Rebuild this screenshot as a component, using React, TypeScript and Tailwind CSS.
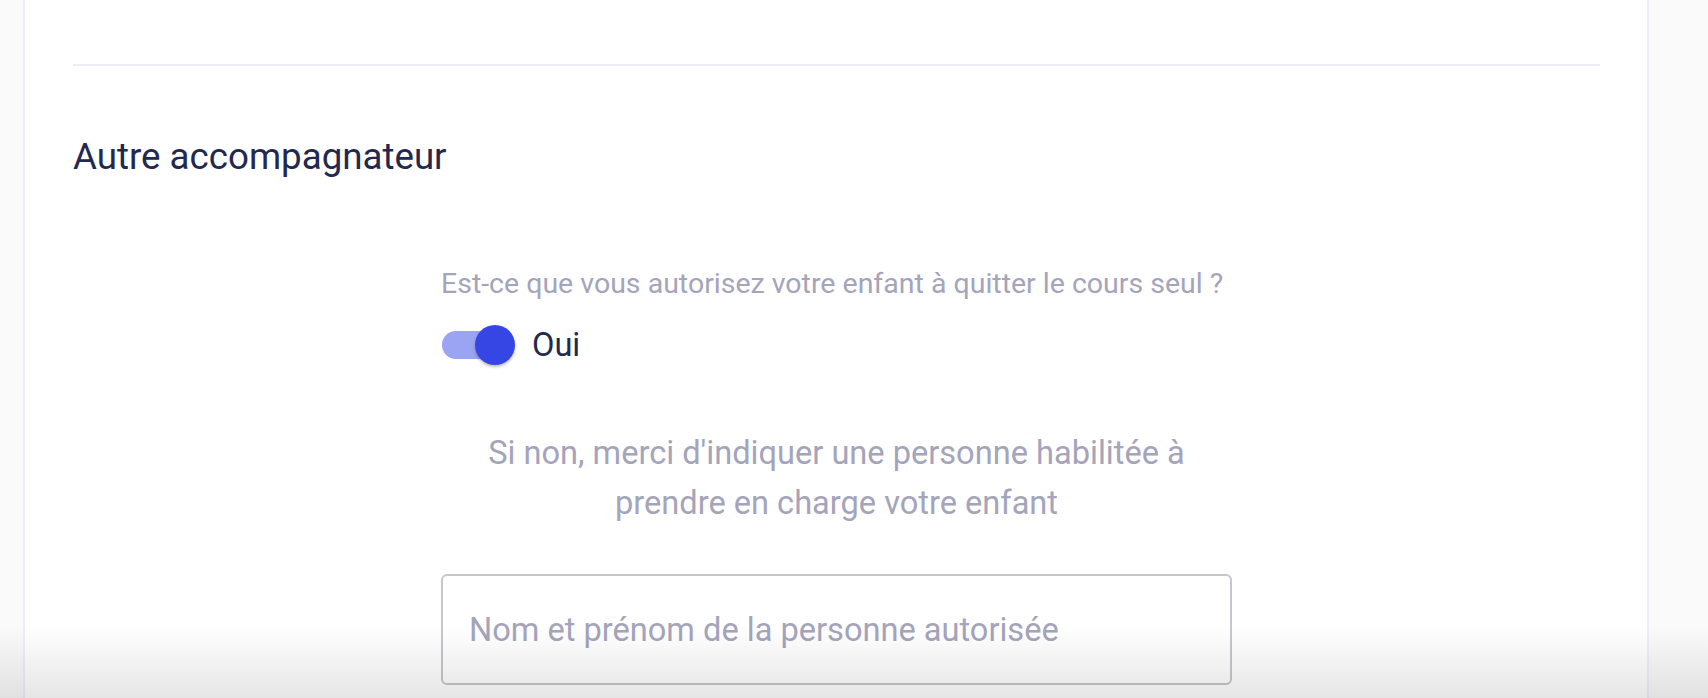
export default function App() {
  return (
    <div className="relative min-h-[698px] w-full overflow-hidden bg-[#fafafa] font-['Roboto',sans-serif]">
      <div className="ml-[23px] mr-[59px] min-h-[698px] border-x-2 border-[#efeef8] bg-white pl-[48px] pr-[47px] pt-[64px]">
        <div className="h-[2px] bg-[#efeef8]" />

        <h2 className="mt-[73px] text-[36.7px] leading-none text-[#23284f]">
          Autre accompagnateur
        </h2>

        <div className="mx-auto mt-[94px] w-[791px]">
          <p className="text-[28.5px] leading-none text-[#a4a4bb]">
            Est-ce que vous autorisez votre enfant à quitter le cours seul ?
          </p>

          <div className="mt-[27px] flex items-center gap-[17px]">
            <div className="relative h-10 w-[74px]">
              <div className="absolute left-[1px] top-[6px] h-[28px] w-[68px] rounded-full bg-[#9ba4f2]" />
              <div className="absolute right-0 top-0 h-10 w-10 rounded-full bg-[#3646e5] shadow-[0_2px_3px_rgba(0,0,0,0.25)]" />
            </div>
            <span className="text-[32.6px] leading-none text-[#23284f]">Oui</span>
          </div>

          <p className="mt-[63px] text-center text-[32.6px] leading-[50px] text-[#a4a4bb]">
            Si non, merci d'indiquer une personne habilitée à
            <br />
            prendre en charge votre enfant
          </p>

          <input
            type="text"
            placeholder="Nom et prénom de la personne autorisée"
            className="mt-[46px] h-[111px] w-full rounded-[6px] border-2 border-[#c6c6cc] bg-transparent px-[26px] text-[32.6px] text-[#23284f] outline-none placeholder:text-[#a4a4bb]"
          />
        </div>
      </div>

      {/* bottom fade */}
      <div className="pointer-events-none absolute inset-x-0 bottom-0 h-[72px] bg-gradient-to-b from-transparent to-black/10" />
    </div>
  )
}
